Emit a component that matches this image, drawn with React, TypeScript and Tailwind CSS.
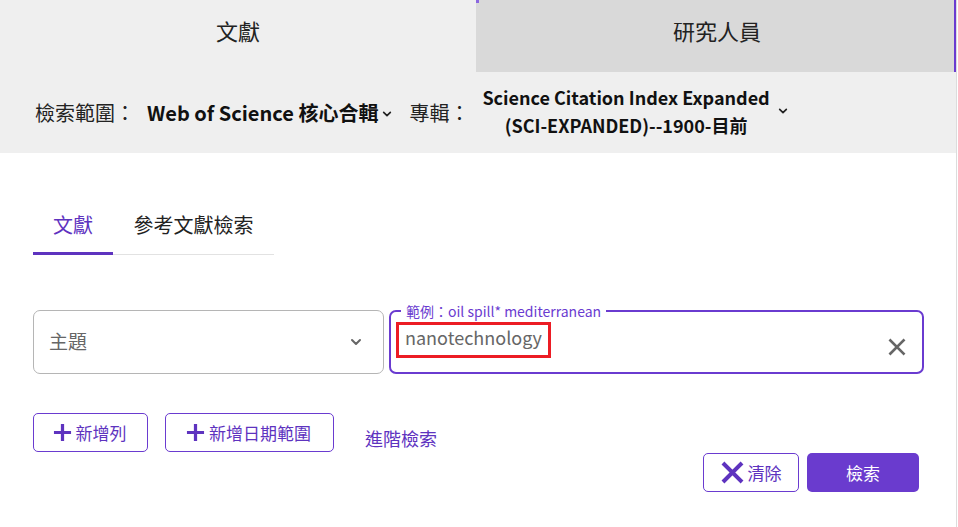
const purple = "#5e33bf";

const Chevron = ({ className }: { className?: string }) => (
  <svg viewBox="0 0 12 8" className={className} fill="none" stroke="currentColor" strokeWidth={2} strokeLinecap="round" strokeLinejoin="round">
    <path d="M2 2l4 4 4-4" />
  </svg>
);

const Cross = ({ className, w = 2.5 }: { className?: string; w?: number }) => (
  <svg viewBox="0 0 20 20" className={className} fill="none" stroke="currentColor" strokeWidth={w} strokeLinecap="square">
    <path d="M4 4l12 12M16 4L4 16" />
  </svg>
);

const Plus = ({ className }: { className?: string }) => (
  <svg viewBox="0 0 20 20" className={className} fill="none" stroke="currentColor" strokeWidth={3.4}>
    <path d="M10 1v18M1 10h18" />
  </svg>
);

export default function App() {
  return (
    <div className="w-[958px] h-[527px] bg-white text-[#222] overflow-hidden" style={{ fontFamily: '"Noto Sans CJK TC", "Noto Sans", sans-serif' }}>
      <div className="w-[957px] border-r border-[#dcdcdc] h-full">
        {/* main tabs */}
        <div className="flex h-[72px]">
          <div className="w-[476px] bg-[#efefef] flex items-center justify-center text-[22px] text-[#222] pb-[12px]">文獻</div>
          <div className="relative flex-1 bg-[#d9d9d9] border-r-2 border-[#6a3bd0] flex items-center justify-center text-[22px] text-[#222] pb-[12px] pl-[4px]">
            研究人員
            <span className="absolute left-0 top-0 w-[3px] h-[3px] bg-[#8a66e0]" />
          </div>
        </div>

        {/* scope */}
        <div className="h-[81px] bg-[#efefef] flex items-center pl-[35px] text-[20px]">
          <span>檢索範圍：</span>
          <span className="ml-[12px] font-bold text-[#111] text-[20px]">Web of Science 核心合輯</span>
          <Chevron className="w-[10px] h-[8px] ml-[4px] mt-[2px] text-[#222]" />
          <span className="ml-[17px]">專輯：</span>
          <div className="ml-[13px] flex flex-col items-center font-bold text-[#111] text-[18px] leading-[28px] -mt-[4px]">
            <span>Science Citation Index Expanded</span>
            <span>(SCI-EXPANDED)--1900-目前</span>
          </div>
          <Chevron className="w-[10px] h-[8px] ml-[8px] mb-[4px] text-[#222]" />
        </div>

        {/* search form */}
        <div className="pl-[33px] pr-[33px] pt-[57px]">
          <div className="flex w-[241px] text-[20px] border-b border-[#e2e2e2]">
            <div className="w-[80px] text-center pb-[12px] border-b-[3px] border-[#5e33bf] -mb-px" style={{ color: purple }}>文獻</div>
            <div className="flex-1 text-center pb-[12px] text-[#222]">參考文獻檢索</div>
          </div>

          <div className="flex gap-[5px] mt-[55px] h-[64px]">
            <div className="w-[351px] shrink-0 h-[64px] border border-[#b5b5b5] rounded-[7px] flex items-center justify-between pl-[15px] pr-[21px] text-[19px] text-[#666]">
              <span className="pb-[2px]">主題</span>
              <Chevron className="w-[12px] h-[8px] text-[#666]" />
            </div>
            <div className="relative w-[535px] shrink-0 h-[64px] border-2 border-[#6a3bd0] rounded-[7px] flex items-start justify-between pl-[5px] pr-[14px]">
              <span className="absolute -top-[9px] left-[10px] bg-white px-[5px] text-[14px] leading-[16px] text-[#6a3bd0]">範例：oil spill* mediterranean</span>
              <span className="mt-[10px] border-[3px] border-[#ec1c24] px-[6px] h-[36px] leading-[25px] text-[18px] text-[#666]">nanotechnology</span>
              <Cross className="w-[22px] h-[22px] mt-[24px] text-[#666]" w={2.4} />
            </div>
          </div>

          <div className="flex items-start mt-[39px]">
            <button className="w-[115px] h-[39px] border border-[#6a3bd0] rounded-[5px] flex items-center justify-center gap-[4px] text-[17px] pr-[2px]" style={{ color: purple }}>
              <Plus className="w-[19px] h-[19px]" />
              新增列
            </button>
            <button className="ml-[17px] w-[169px] h-[39px] border border-[#6a3bd0] rounded-[5px] flex items-center justify-center gap-[4px] text-[17px] pr-[2px]" style={{ color: purple }}>
              <Plus className="w-[19px] h-[19px]" />
              新增日期範圍
            </button>
            <span className="ml-[31px] mt-[12px] text-[18px]" style={{ color: purple }}>進階檢索</span>
          </div>

          <div className="flex justify-end gap-[8px] mr-[4px] mt-[1px]">
            <button className="w-[96px] h-[39px] border border-[#6a3bd0] rounded-[5px] flex items-center justify-center gap-[2px] text-[17px] pr-[2px]" style={{ color: purple }}>
              <Cross className="w-[27px] h-[27px]" w={3} />
              清除
            </button>
            <button className="w-[112px] h-[39px] bg-[#6a3bce] rounded-[5px] text-white text-[17px]">檢索</button>
          </div>
        </div>
      </div>
    </div>
  );
}
